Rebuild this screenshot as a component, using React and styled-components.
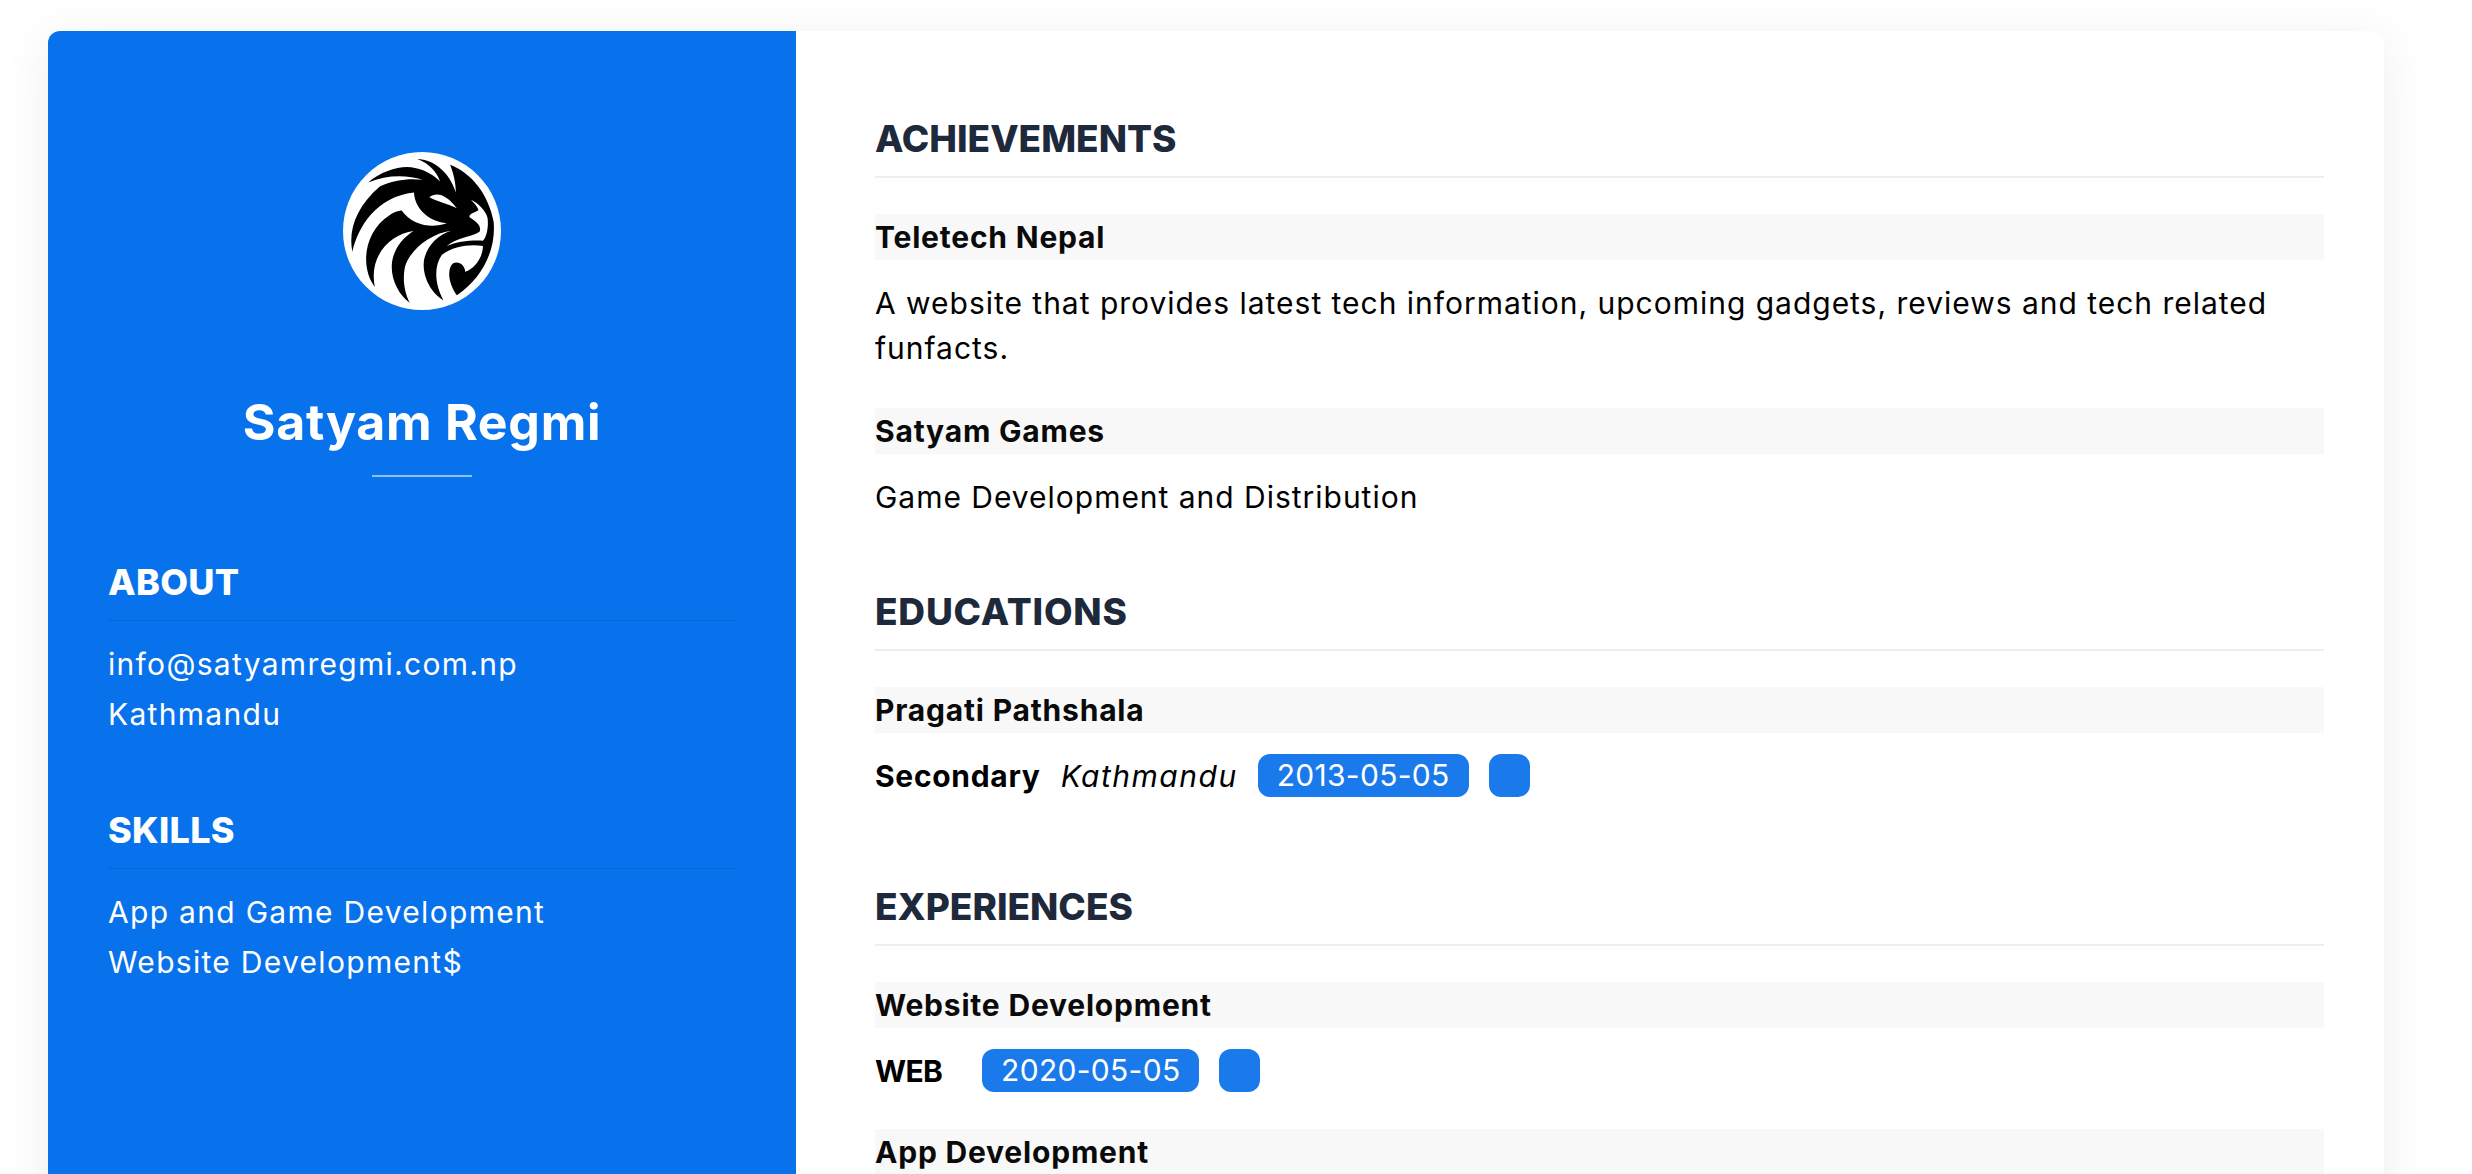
import styled, { createGlobalStyle } from "styled-components";

const GlobalStyle = createGlobalStyle`
  * { box-sizing: border-box; }
  html, body { margin: 0; padding: 0; background: #fff; }
  body { font-family: Inter, "Open Sans", sans-serif; color: #000; }
`;

const Page = styled.div`
  height: 100vh;
  overflow: hidden;
  padding: 31px 88px 0 48px;
`;

const Card = styled.div`
  display: grid;
  grid-template-columns: 748px 1fr;
  min-height: 1400px;
  background: #fff;
  border-radius: 12px;
  box-shadow: 0 8px 50px rgba(20, 20, 50, 0.07);
`;

const Sidebar = styled.aside`
  background: #0872ec;
  color: #fff;
  border-radius: 12px 0 0 12px;
  padding: 121px 60px 0;
`;

const Profile = styled.div`
  display: flex;
  flex-direction: column;
  align-items: center;
  margin-bottom: 80px;
`;

const Avatar = styled.svg`
  width: 158px;
  height: 158px;
  display: block;
`;

const Name = styled.h1`
  margin: 77px 0 0;
  font-size: 50px;
  line-height: 70px;
  font-weight: 700;
  letter-spacing: 0.7px;
`;

const NameRule = styled.div`
  width: 100px;
  height: 2px;
  margin-top: 18px;
  background: rgba(255, 255, 255, 0.55);
`;

const SideBlock = styled.section`
  margin-bottom: 66px;
`;

const SideHeading = styled.h2`
  margin: 0 0 18px;
  padding-bottom: 13px;
  font-size: 36px;
  line-height: 50px;
  font-weight: 800;
  letter-spacing: 0.3px;
  text-transform: uppercase;
  border-bottom: 1px solid rgba(0, 0, 0, 0.08);
`;

const SideLine = styled.div`
  font-size: 30px;
  line-height: 50px;
  letter-spacing: 1.3px;
`;

const Main = styled.main`
  padding: 83px 60px 0 79px;
`;

const Section = styled.section`
  padding-bottom: ${(p) => p.$after || 30}px;
`;

const Heading = styled.h2`
  margin: 0 0 36px;
  padding-bottom: 12px;
  font-size: 37px;
  line-height: 50px;
  font-weight: 800;
  letter-spacing: ${(p) => p.$spacing || 0}px;
  color: #1e293b;
  text-transform: uppercase;
  border-bottom: 2px solid #eeeeee;
`;

const Item = styled.div`
  margin-bottom: 37px;
`;

const ItemTitle = styled.div`
  height: 46px;
  margin-bottom: 21px;
  background: #f8f8f8;
  font-size: 30px;
  line-height: 46px;
  font-weight: 700;
  letter-spacing: 0.8px;
  color: #0a0a0a;
`;

const Paragraph = styled.p`
  margin: 0;
  font-size: 30px;
  line-height: 45px;
  letter-spacing: 0.98px;
`;

const Meta = styled.div`
  display: flex;
  align-items: center;
  gap: 20px;
  height: 43px;
  font-size: 30px;
`;

const Role = styled.span`
  font-weight: 700;
  letter-spacing: ${(p) => p.$spacing}px;
`;

const Place = styled.span`
  font-style: italic;
  letter-spacing: 1.5px;
`;

const Badge = styled.span`
  height: 43px;
  min-width: 41px;
  padding: 0 19px;
  border-radius: 12px;
  background: #1a7aeb;
  color: #fff;
  font-size: 30px;
  line-height: 43px;
  letter-spacing: 0.3px;
`;

const LionLogo = () => (
  <Avatar viewBox="130 97 472 472">
    <circle cx="366" cy="333" r="236" fill="#fff" />
    <path
      fill="#000"
      d="M205,188 C250,150 310,135 345,145 C380,152 405,170 420,185 C410,155 385,130 352,118 C400,118 450,160 467,218 C467,190 460,160 450,135 C515,160 565,225 580,305 C588,390 545,475 470,525 C448,495 438,450 458,430 C475,420 495,435 495,455 C525,445 548,410 548,378 C510,372 460,378 425,405 C400,440 405,495 430,540 C395,520 365,470 372,420 C380,380 410,345 453,332 C390,340 330,390 315,440 C305,490 320,530 330,548 C290,520 265,460 280,410 C290,375 315,350 340,333 C280,340 205,400 225,500 C185,450 185,340 270,285 C285,275 300,272 305,272 C340,320 400,325 440,310 C390,305 345,270 342,218 C230,230 175,320 158,395 C145,330 170,260 240,200 C280,180 330,175 368,180 C320,165 260,165 205,188 Z"
    />
    <path fill="#fff" d="M388,232 C410,215 440,225 470,265 C440,250 410,245 388,232 Z" />
    <path
      fill="#fff"
      d="M440,378 C470,352 510,352 538,335 C545,320 530,305 508,292 C505,280 525,278 535,270 C530,258 520,248 512,240 C535,250 558,275 562,295 C565,320 560,350 548,362 C510,360 470,365 440,378 Z"
    />
  </Avatar>
);

const App = () => {
  return (
    <Page>
      <GlobalStyle />
      <Card>
        <Sidebar>
          <Profile>
            <LionLogo />
            <Name>Satyam Regmi</Name>
            <NameRule />
          </Profile>
          <SideBlock>
            <SideHeading>About</SideHeading>
            <SideLine>info@satyamregmi.com.np</SideLine>
            <SideLine>Kathmandu</SideLine>
          </SideBlock>
          <SideBlock>
            <SideHeading>Skills</SideHeading>
            <SideLine>App and Game Development</SideLine>
            <SideLine>Website Development$</SideLine>
          </SideBlock>
        </Sidebar>
        <Main>
          <Section>
            <Heading>Achievements</Heading>
            <Item>
              <ItemTitle>Teletech Nepal</ItemTitle>
              <Paragraph>A website that provides latest tech information, upcoming gadgets, reviews and tech related funfacts.</Paragraph>
            </Item>
            <Item>
              <ItemTitle>Satyam Games</ItemTitle>
              <Paragraph>Game Development and Distribution</Paragraph>
            </Item>
          </Section>
          <Section $after={48}>
            <Heading $spacing={0.8}>Educations</Heading>
            <Item>
              <ItemTitle>Pragati Pathshala</ItemTitle>
              <Meta>
                <Role $spacing={0.7}>Secondary</Role>
                <Place>Kathmandu</Place>
                <Badge>2013-05-05</Badge>
                <Badge />
              </Meta>
            </Item>
          </Section>
          <Section>
            <Heading>Experiences</Heading>
            <Item>
              <ItemTitle>Website Development</ItemTitle>
              <Meta>
                <Role $spacing={-0.7}>WEB</Role>
                <Place />
                <Badge>2020-05-05</Badge>
                <Badge />
              </Meta>
            </Item>
            <Item>
              <ItemTitle>App Development</ItemTitle>
            </Item>
          </Section>
        </Main>
      </Card>
    </Page>
  );
};

export default App;
